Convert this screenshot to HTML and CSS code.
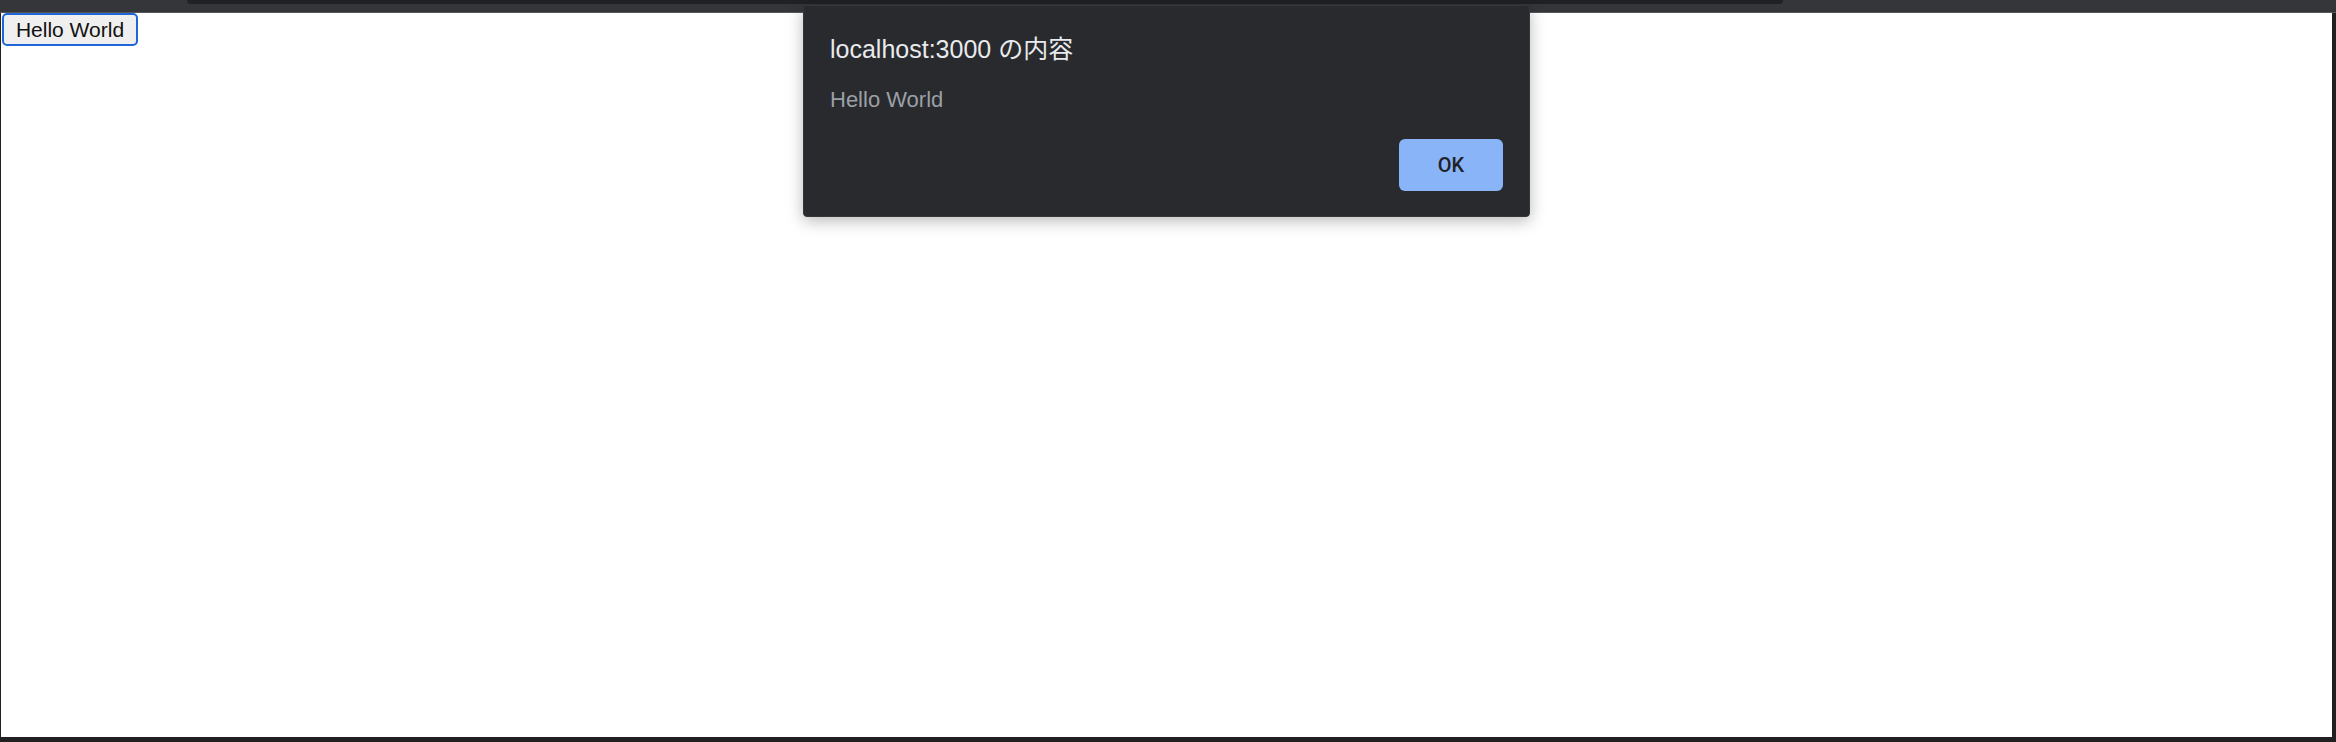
FILE: index.html
```html
<!DOCTYPE html>
<html lang="ja">
<head>
<meta charset="utf-8">
<title>localhost:3000</title>
<link rel="stylesheet" href="styles.css">
</head>
<body>
<div class="screen">
  <div class="chrome">
    <div class="tab-edge"></div>
  </div>
  <div class="page">
    <button class="hello-btn">Hello World</button>
  </div>
  <div class="dialog">
    <div class="dialog-title">localhost:3000 の内容</div>
    <div class="dialog-message">Hello World</div>
    <div class="dialog-actions">
      <button class="ok-btn">OK</button>
    </div>
  </div>
</div>
</body>
</html>
```

FILE: styles.css
```css
* { box-sizing: border-box; }
html, body {
  margin: 0;
  padding: 0;
  height: 100%;
  background: #202020;
  overflow: hidden;
}
.screen {
  position: relative;
  height: 742px;
  display: flex;
  flex-direction: column;
  padding: 0 4px 5px 1px;
  background: #202020;
  font-family: "Liberation Sans", "Noto Sans CJK JP", sans-serif;
}
.chrome {
  height: 13px;
  flex: none;
  background: #35363a;
  border-bottom: 1px solid #55575b;
  margin-left: -1px;
  margin-right: -4px;
  padding-left: 187px;
}
.tab-edge {
  width: 1596px;
  height: 4px;
  background: #202124;
  border-radius: 0 0 14px 14px;
}
.page {
  flex: 1;
  background: #ffffff;
  padding: 0 0 0 1px;
}
.hello-btn {
  display: block;
  width: 136px;
  height: 33px;
  margin: 0;
  padding: 0;
  background: #efefef;
  border: 2px solid #1f66d8;
  border-radius: 5px;
  color: #111111;
  font-family: "Liberation Sans", sans-serif;
  font-size: 21px;
  line-height: 29px;
  text-align: center;
}
.dialog {
  position: absolute;
  left: 803px;
  top: 5px;
  width: 727px;
  height: 212px;
  background: #292a2d;
  border: 1px solid #35363a;
  border-radius: 2px 2px 4px 4px;
  box-shadow: 0 4px 16px rgba(0, 0, 0, 0.28);
  padding: 28px 26px 25px 26px;
  display: flex;
  flex-direction: column;
}
.dialog-title {
  color: #e8eaed;
  font-size: 25px;
  line-height: 30px;
}
.dialog-message {
  margin-top: 23px;
  color: #9aa0a6;
  font-size: 22px;
  line-height: 26px;
}
.dialog-actions {
  margin-top: auto;
  display: flex;
  justify-content: flex-end;
}
.ok-btn {
  width: 104px;
  height: 52px;
  margin: 0;
  padding: 0;
  border: none;
  border-radius: 6px;
  background: #8ab4f8;
  color: #202124;
  font-family: Roboto, "Liberation Sans", sans-serif;
  font-size: 20px;
  font-weight: 500;
  text-align: center;
}
```
